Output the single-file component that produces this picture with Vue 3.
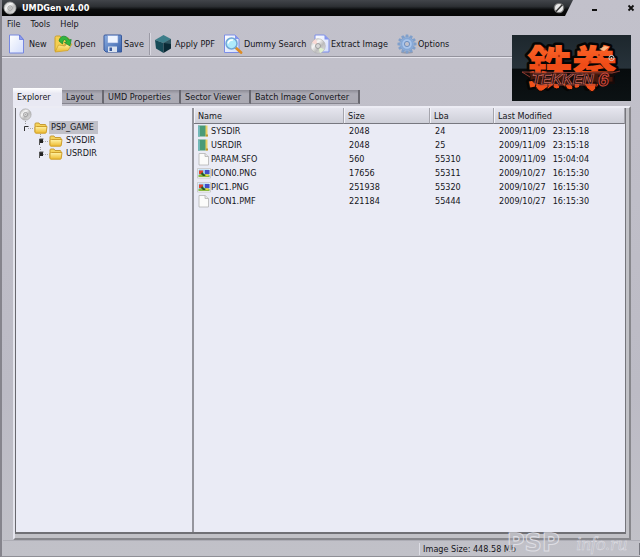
<script setup>
import { ref } from 'vue'

const menus = ['File', 'Tools', 'Help']
const tools = [
  { id: 'new', label: 'New' },
  { id: 'open', label: 'Open' },
  { id: 'save', label: 'Save' },
  { id: 'sep' },
  { id: 'ppf', label: 'Apply PPF' },
  { id: 'search', label: 'Dummy Search' },
  { id: 'extract', label: 'Extract Image' },
  { id: 'options', label: 'Options' }
]
const tabs = ['Explorer', 'Layout', 'UMD Properties', 'Sector Viewer', 'Batch Image Converter']
const active = ref('Explorer')
const files = [
  { kind: 'dir', name: 'SYSDIR', size: 2048, lba: 24, date: '2009/11/09', time: '23:15:18' },
  { kind: 'dir', name: 'USRDIR', size: 2048, lba: 25, date: '2009/11/09', time: '23:15:18' },
  { kind: 'doc', name: 'PARAM.SFO', size: 560, lba: 55310, date: '2009/11/09', time: '15:04:04' },
  { kind: 'img', name: 'ICON0.PNG', size: 17656, lba: 55311, date: '2009/10/27', time: '16:15:30' },
  { kind: 'img', name: 'PIC1.PNG', size: 251938, lba: 55320, date: '2009/10/27', time: '16:15:30' },
  { kind: 'doc', name: 'ICON1.PMF', size: 221184, lba: 55444, date: '2009/10/27', time: '16:15:30' }
]
const teeth = [0, 30, 60, 90, 120, 150, 180, 210, 240, 270, 300, 330]
</script>

<template>
  <div class="window">
    <svg class="defs" width="0" height="0" aria-hidden="true">
      <defs>
        <linearGradient id="page" x1="0" y1="0" x2="1" y2="1">
          <stop offset="0" stop-color="#fff" /><stop offset="1" stop-color="#d3ddfb" />
        </linearGradient>
        <linearGradient id="gold" x1="0" y1="0" x2="0" y2="1">
          <stop offset="0" stop-color="#fff3a8" /><stop offset="1" stop-color="#edb92c" />
        </linearGradient>
        <linearGradient id="steel" x1="0" y1="0" x2="1" y2="1">
          <stop offset="0" stop-color="#8eb1e4" /><stop offset="1" stop-color="#365fa8" />
        </linearGradient>
        <linearGradient id="disc" x1="0" y1="0" x2="1" y2="1">
          <stop offset="0" stop-color="#aaa" /><stop offset=".35" stop-color="#f7f7f7" />
          <stop offset=".6" stop-color="#bcbcbc" /><stop offset="1" stop-color="#ececec" />
        </linearGradient>
        <linearGradient id="night" x1="0" y1="0" x2="0" y2="1">
          <stop offset="0" stop-color="#1d272d" /><stop offset=".5" stop-color="#27323a" />
          <stop offset=".52" stop-color="#070b0d" /><stop offset="1" stop-color="#0c1214" />
        </linearGradient>
        <linearGradient id="fire" x1="0" y1="0" x2="0" y2="1">
          <stop offset="0" stop-color="#ff7433" /><stop offset=".5" stop-color="#f04c17" />
          <stop offset="1" stop-color="#f2551c" />
        </linearGradient>
        <symbol id="folder" viewBox="0 0 14 12">
          <path d="M1 10V2q0-1 1-1h3l1 1.500h5q1 0 1 1V5" fill="#f5d35a" stroke="#c79c35" />
          <path d="M2.500 4.500h10.500l-.8 6q0 .7-1 .7H2q-1 0-1-1V5q0-.5 1.500-.5z" fill="url(#gold)" stroke="#cf9f2c" />
        </symbol>
        <symbol id="cd" viewBox="0 0 14 14">
          <circle cx="7" cy="7" r="6" fill="url(#disc)" stroke="#a3a3a3" stroke-width=".8" />
          <circle cx="7" cy="7" r="2.200" fill="#ddd" stroke="#888" stroke-width=".7" />
          <circle cx="7" cy="7" r=".9" fill="#aaa" />
        </symbol>
      </defs>
    </svg>

    <header class="titlebar">
      <div class="caption">
        <svg class="app-icon" viewBox="0 0 14 14"><use href="#cd" /></svg>
        <h1>UMDGen v4.00</h1>
        <svg class="knob" viewBox="0 0 12 12">
          <circle cx="6" cy="6" r="5.300" fill="#777" />
          <circle cx="6" cy="6" r="4" fill="#e8e8e8" />
          <path d="M3 9.500L9.300 2.800" stroke="#333" stroke-width="1.500" />
        </svg>
      </div>
      <div class="controls">
        <button type="button" aria-label="Minimize"><svg viewBox="0 0 8 8"><path d="M1 6h5" stroke="#111" stroke-width="2" /></svg></button>
        <button type="button" aria-label="Close"><svg viewBox="0 0 8 8"><path d="M1.500 1.500l5 5M6.500 1.500l-5 5" stroke="#111" stroke-width="1.800" /></svg></button>
      </div>
    </header>

    <main class="body">
      <div class="top">
        <div class="commands">
          <nav class="menu">
            <button v-for="m in menus" :key="m" type="button">{{ m }}</button>
          </nav>
          <div class="toolbar">
            <template v-for="t in tools" :key="t.id">
              <i v-if="t.id === 'sep'" class="sep"></i>
              <button v-else type="button" class="tool">
                <svg viewBox="0 0 20 20" aria-hidden="true">
                  <g v-if="t.id === 'new'">
                    <path d="M1.500 1h10l4 4.500V19h-14z" fill="url(#page)" stroke="#7688e2" />
                    <path d="M11.500 1v4.500h4z" fill="#8d9df0" stroke="#5e70d8" stroke-width=".7" />
                  </g>
                  <g v-else-if="t.id === 'open'">
                    <path d="M2 17V3.500q0-1.500 1.500-1.500H7l1.500 2H15q1 0 1 1v3z" fill="#f4cf51" stroke="#caa02d" />
                    <path d="M2 18l3.500-7 6.500 1 2-2.500 5 .5-4 6.500z" fill="url(#gold)" stroke="#cfa22c" stroke-width=".8" />
                    <path d="M6 7C7 1 13.500 .5 16 6l2.200-.5-1.200 6.500-5.500-3.500 2-.8C12 4.500 10 5 9.500 10z" fill="#32b53c" stroke="#16812c" stroke-width=".7" />
                  </g>
                  <g v-else-if="t.id === 'save'">
                    <path d="M1 2q0-1 1-1h15.500q1 0 1 1v16H3l-2-2z" fill="url(#steel)" stroke="#38599c" />
                    <path d="M4.500 1.500h10.500V9H4.500z" fill="#eef4ff" stroke="#7896cf" stroke-width=".6" />
                    <path d="M5 12.500h9V18H5z" fill="#dae2ef" /><path d="M6.500 13.500h2.500V17H6.500z" fill="#38599c" />
                  </g>
                  <g v-else-if="t.id === 'ppf'">
                    <path d="M9.500 1l7.500 4-7.500 4L1 6z" fill="#3d7e8a" />
                    <path d="M1 6l8.500 3v10L2 14.500z" fill="#174b58" />
                    <path d="M17 5v9.500L9.500 19V9z" fill="#0a2a35" />
                    <path d="M9.500 9l7.500-4v5z" fill="#45727b" opacity=".6" />
                  </g>
                  <g v-else-if="t.id === 'search'">
                    <path d="M1.500 1h10.500l4 4v13.500H1.500z" fill="url(#page)" stroke="#7c8ee8" />
                    <path d="M12 1v4h4z" fill="#8595ee" />
                    <path d="M12.500 13.500l5.500 5" stroke="#dd8c25" stroke-width="2.800" stroke-linecap="round" />
                    <circle cx="8.500" cy="9.500" r="5.500" fill="#afeafb" stroke="#72a7d5" stroke-width="1.500" />
                    <path d="M5 9.500q1-4 5-3.500" stroke="#fff" stroke-width="1.500" fill="none" />
                  </g>
                  <g v-else-if="t.id === 'extract'">
                    <path d="M5 1h9.500L19 5.500V18H5z" fill="url(#page)" stroke="#7c8ee8" />
                    <path d="M14.500 1v4.500H19z" fill="#8595ee" />
                    <circle cx="8" cy="12" r="7.300" fill="url(#disc)" stroke="#b5b5b5" stroke-width=".7" />
                    <path d="M8 12L2 8.500Q4 5.500 6 5z" fill="#f9d9d4" /><path d="M8 12l6 3.500q-2 3-4 3.500z" fill="#e0f2cf" />
                    <circle cx="8" cy="12" r="2.500" fill="#d8d8d8" stroke="#909090" stroke-width=".8" />
                  </g>
                  <g v-else>
                    <ellipse cx="10" cy="18.500" rx="6" ry="1" fill="#999aa6" />
                    <g fill="#7f9fcb">
                      <path v-for="a in teeth" :key="a" d="M8.200 3.500L8.800 .5h2.400l.6 3z" :transform="`rotate(${a} 10 10)`" />
                    </g>
                    <circle cx="10" cy="10" r="5.800" fill="#a9c5ec" stroke="#86a8d6" stroke-width="2" />
                    <circle cx="10" cy="10" r="2.600" fill="#c1c1cb" stroke="#6f90c0" />
                  </g>
                </svg>
                <span>{{ t.label }}</span>
              </button>
            </template>
          </div>
          <div class="tabs" role="tablist">
            <button v-for="t in tabs" :key="t" type="button" role="tab" class="tab" :class="{ on: t === active }" :aria-selected="t === active" @click="active = t">{{ t }}</button>
          </div>
        </div>

        <svg class="logo" viewBox="0 0 119 66" role="img" aria-label="Tekken 6">
          <rect width="119" height="66" fill="url(#night)" />
          <text x="15" y="49" class="kanji">鉄拳</text>
          <g fill="#ee4e1a" stroke="#050505" stroke-width="1">
            <path d="M24 48q6 3 11 0q3 4-2 6q-4 4-7 1q-4-3-2-7z" />
            <path d="M42 47q5 1 6 5q-3 4-7 0z" /><path d="M53 50q6-3 8 2q0 4-6 2z" />
            <path d="M71 47q8 2 13 0q1 8-4 10q-5-2-9-10z" /><path d="M63 47q5 0 5 4q-3 4-6 1z" />
          </g>
          <g fill="#7e1c08" opacity=".55">
            <circle cx="33" cy="14" r="1.500" /><circle cx="27" cy="30" r="1.200" /><circle cx="47" cy="21" r="1.200" />
            <circle cx="78" cy="27" r="1.500" /><circle cx="87" cy="20" r="1" /><circle cx="68" cy="16" r="1" />
          </g>
          <path d="M87 14l6-3 4 1-5 4z" fill="#ffd0a0" opacity=".8" />
          <circle cx="99.500" cy="23" r="2.600" fill="none" stroke="#ccc" />
          <circle cx="99.500" cy="23" r=".9" fill="#ccc" />
          <path d="M10 37l20 1 78-2-6 5 1 8H23l-7-7z" fill="#1a0b0a" opacity=".8" />
          <path d="M108 36l-8 2-90-1 8 5M26 50h58" fill="none" stroke="#a8453a" stroke-width=".8" />
          <text x="20" y="49" class="word">TEKKEN</text>
          <text x="86" y="51" class="six">6</text>
        </svg>
      </div>

      <section class="panel">
        <div class="split">
          <div class="tree" role="tree">
            <svg class="root" viewBox="0 0 14 14"><use href="#cd" /></svg>
            <div class="node">
              <svg class="branch" viewBox="0 0 14 13"><path d="M6.500 0v4" stroke="#999" stroke-dasharray="1 1" /><path d="M5.500 10V5.500h4" fill="none" stroke="#333" /><path d="M9 7.500h5" stroke="#aaa" stroke-dasharray="1 1" /></svg>
              <svg class="folder" viewBox="0 0 14 12"><use href="#folder" /></svg>
              <span class="name selected">PSP_GAME</span>
            </div>
            <div v-for="n in ['SYSDIR', 'USRDIR']" :key="n" class="node child">
              <svg class="branch" viewBox="0 0 14 13"><path d="M6.500 0v4" stroke="#999" stroke-dasharray="1 1" /><rect x="5" y="5" width="4" height="4" fill="#222" /><path d="M5.500 11V5h4" fill="none" stroke="#555" /><path d="M9 7.500h5" stroke="#aaa" stroke-dasharray="1 1" /></svg>
              <svg class="folder" viewBox="0 0 14 12"><use href="#folder" /></svg>
              <span class="name">{{ n }}</span>
            </div>
          </div>

          <div class="list">
            <table>
              <colgroup><col class="c-name" /><col class="c-size" /><col class="c-lba" /><col /></colgroup>
              <thead>
                <tr><th>Name</th><th>Size</th><th>Lba</th><th>Last Modified</th></tr>
              </thead>
              <tbody>
                <tr v-for="f in files" :key="f.name">
                  <td>
                    <span class="file">
                      <svg viewBox="0 0 14 14" aria-hidden="true">
                        <g v-if="f.kind === 'dir'">
                          <path d="M8 1.500h2.500v11H8z" fill="#e9cf62" /><path d="M1 1.500h7.500v11H1z" fill="#4a9a77" />
                          <path d="M1 1.500l2 1v10H1z" fill="#72b8b8" /><path d="M9 10.500h2v2H9z" fill="#bb942e" />
                        </g>
                        <g v-else-if="f.kind === 'doc'">
                          <path d="M2 1.500h6l3.500 3v8.500H2z" fill="#fbfbfa" stroke="#b3b3b3" stroke-width=".8" />
                          <path d="M8 1.500v3h3.500" fill="#e6e6e6" stroke="#b3b3b3" stroke-width=".8" />
                        </g>
                        <g v-else>
                          <path d="M.5 2.500h13v9.500H.5z" fill="#fff" stroke="#bbb" stroke-width=".7" />
                          <path d="M1.500 3.500h11v7.500h-11z" fill="#92c8ef" /><path d="M8 4h4.500v4H8z" fill="#454fc5" />
                          <path d="M1.500 9q5-2 11 0v2h-11z" fill="#8bb940" />
                          <path d="M2 4.500h4v3.500H2z" fill="#e3442c" /><path d="M5 6l4 4H6L4 8z" fill="#265a26" />
                          <path d="M8.500 8.500h3v1.500h-3z" fill="#f2d63a" />
                        </g>
                      </svg>
                      <span>{{ f.name }}</span>
                    </span>
                  </td>
                  <td>{{ f.size }}</td>
                  <td>{{ f.lba }}</td>
                  <td><span class="stamp"><span>{{ f.date }}</span><span>{{ f.time }}</span></span></td>
                </tr>
              </tbody>
            </table>
          </div>
        </div>
      </section>
    </main>

    <footer class="status">
      <span class="size">Image Size: 448.58 Mb</span>
      <i class="grip"></i>
      <svg class="mark" viewBox="0 0 130 24" aria-hidden="true">
        <text x="1" y="19" class="psp">PSP</text>
        <text x="70" y="18" class="info">info.ru</text>
      </svg>
    </footer>
  </div>
</template>

<style>
body { margin: 0; background: #c0bfc9; }
</style>

<style scoped>
* { box-sizing: border-box; }
.window {
  display: flex;
  flex-direction: column;
  min-height: 100vh;
  background: linear-gradient(#c2c1cb, #bcbbc5 70%, #c1c1c8);
  border-left: 2px solid #85848c;
  border-bottom: 1px solid #8f8f96;
  color: #15151a;
  font: 9px/14px "DejaVu Sans Condensed", "DejaVu Sans", sans-serif;
}
.defs { position: absolute; }
button {
  margin: 0; padding: 0; border: 0; background: none;
  color: inherit; font: inherit; white-space: nowrap; text-align: left;
}
svg { display: block; flex: none; }

.titlebar { display: flex; height: 16px; }
.caption {
  flex: 1;
  display: flex;
  align-items: center;
  gap: 5px;
  padding: 0 8px 0 1px;
  background: linear-gradient(#42454a, #2d3034 40%, #0b0c0d 60%, #050505);
  clip-path: polygon(0 0, 100% 0, calc(100% - 8px) 100%, 0 100%);
}
.app-icon { width: 14px; height: 14px; }
.caption h1 { flex: 1; margin: 0; color: #fff; font-size: 9px; line-height: 14px; }
.knob { width: 12px; height: 12px; }
.controls { display: flex; align-items: center; justify-content: flex-end; gap: 28px; width: 67px; padding-right: 5px; }
.controls svg { width: 8px; height: 8px; }

.body { flex: 1; display: flex; flex-direction: column; padding: 0 9px 0 11px; }
.top { display: flex; align-items: flex-start; }
.commands { flex: 1; min-width: 0; }
.menu { display: flex; gap: 10px; height: 16px; margin-left: -6px; }
.toolbar {
  display: grid;
  grid-template-columns: 45px 50px 46px 5px 69px 87px 87px 1fr;
  align-items: center;
  height: 25px;
  margin-left: -11px;
  padding-left: 6px;
  border-bottom: 1px solid #94939d;
  box-shadow: 0 1px #e5e4ec;
}
.tool { display: flex; align-items: center; gap: 1px; }
.tool svg { width: 20px; height: 20px; }
.sep { width: 2px; height: 22px; border-left: 1px solid #9b9aa5; border-right: 1px solid #dad9e2; }
.tabs {
  display: grid;
  grid-template-columns: 49px 42px 77px 70px 109px;
  align-items: end;
  margin-top: 31px;
}
.tab {
  height: 14px;
  margin-bottom: 2px;
  padding-left: 4px;
  background: linear-gradient(#8d8c96, #acabb5 30%, #aaa9b2);
  border-right: 2px solid #696870;
  border-bottom: 1px solid #85848e;
}
.tab.on {
  height: 18px;
  margin-bottom: 0;
  background: linear-gradient(#fff, #e9e9f3 30%);
  border: 0;
}
.logo { width: 119px; height: 66px; margin-top: 19px; overflow: visible; }
.kanji {
  font: 900 45px "Noto Sans CJK JP", sans-serif;
  fill: url(#fire);
  stroke: #050505;
  stroke-width: 5;
  stroke-linejoin: round;
  paint-order: stroke;
}
.word { font: italic 700 15px "Liberation Sans", sans-serif; fill: #260c0b; stroke: #c96c61; stroke-width: .7; }
.six { font: italic 700 19px "Liberation Sans", sans-serif; fill: #260c0b; stroke: #d04b3b; stroke-width: 1; }

.panel {
  flex: 1;
  display: flex;
  padding: 0 3px 4px 0;
  background: #c1c1c6;
  border: 2px solid #87878c;
  border-color: #ececf4 #87878c #87878c #e4e4ec;
}
.split {
  flex: 1;
  display: flex;
  background: #eaebf5;
  border-left: 1px solid #68686e;
  border-right: 1px solid #75757b;
  border-bottom: 2px solid #707075;
}
.tree { width: 178px; padding: 0 0 0 3px; border-right: 2px solid #95959d; }
.root { width: 13px; height: 13px; }
.node { display: flex; align-items: center; height: 13px; gap: 1px; line-height: 13px; }
.child { padding-left: 15px; }
.branch { width: 14px; height: 13px; }
.folder { width: 14px; height: 12px; }
.name { padding: 0 4px 0 2px; }
.selected { background: #c0c0c8; }

.list { flex: 1; min-width: 0; }
table { width: 100%; border-collapse: separate; border-spacing: 0; table-layout: fixed; }
.c-name { width: 150px; }
.c-size { width: 86px; }
.c-lba { width: 64px; }
th {
  height: 16px;
  padding: 0 0 0 4px;
  background: linear-gradient(#e5e5ee, #cecfd8);
  border-right: 1px solid #a5a5ad;
  border-bottom: 1px solid #77777f;
  box-shadow: inset 1px 0 #f2f2f8;
  font-weight: 400;
  text-align: left;
}
td { height: 14px; padding: 0 0 0 5px; white-space: nowrap; }
td:first-child { padding-left: 3px; }
.file { display: flex; align-items: center; height: 14px; }
.file svg { width: 14px; height: 14px; }
.stamp { display: flex; gap: 7px; }

.status { position: relative; display: flex; align-items: center; height: 16px; margin-left: 1px; border-top: 1px solid #adadb5; }
.size { margin-left: auto; padding-left: 3px; border-left: 1px solid #dedee5; line-height: 12px; }
.grip { width: 124px; height: 12px; border-right: 1px solid #77777f; }
.mark { position: absolute; right: 4px; bottom: 0; width: 130px; height: 24px; overflow: visible; }
.mark text { fill: #b5b5bc; fill-opacity: .4; stroke: #dedee4; stroke-width: 1; }
.psp { font: 700 24px "DejaVu Sans", sans-serif; }
.mark .info { font: italic 19px "Liberation Serif", serif; stroke-width: .5; }
</style>
